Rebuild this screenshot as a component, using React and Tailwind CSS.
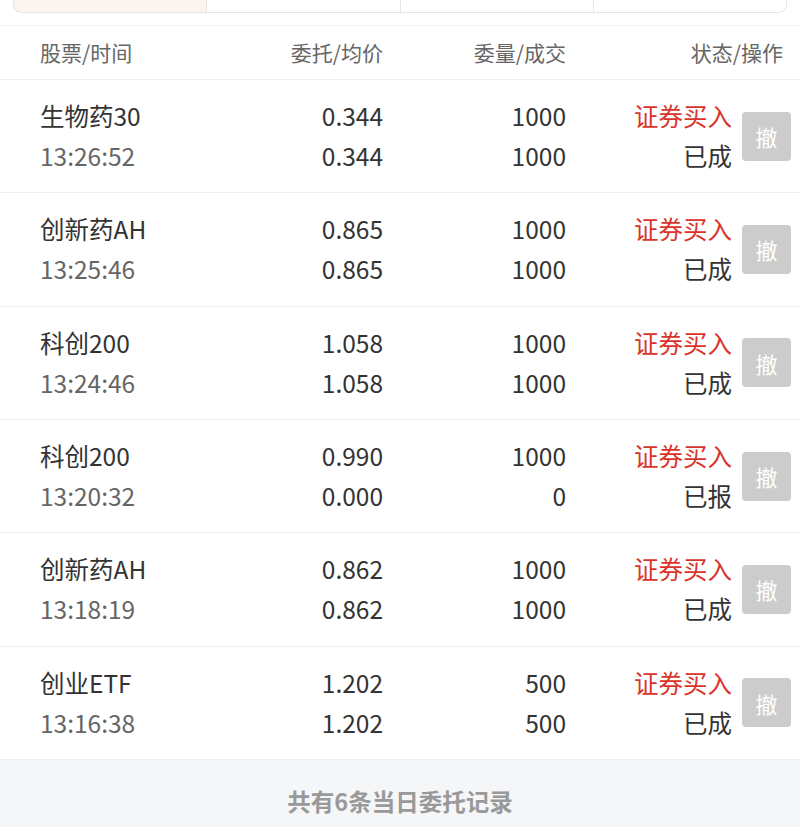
import React from 'react'

const orders = [
  { name: '生物药30', time: '13:26:52', price: '0.344', avg: '0.344', qty: '1000', done: '1000', status: '已成' },
  { name: '创新药AH', time: '13:25:46', price: '0.865', avg: '0.865', qty: '1000', done: '1000', status: '已成' },
  { name: '科创200', time: '13:24:46', price: '1.058', avg: '1.058', qty: '1000', done: '1000', status: '已成' },
  { name: '科创200', time: '13:20:32', price: '0.990', avg: '0.000', qty: '1000', done: '0', status: '已报' },
  { name: '创新药AH', time: '13:18:19', price: '0.862', avg: '0.862', qty: '1000', done: '1000', status: '已成' },
  { name: '创业ETF', time: '13:16:38', price: '1.202', avg: '1.202', qty: '500', done: '500', status: '已成' },
]

const tabs = ['当日委托', '当日成交', '历史委托', '历史成交']

export default function App() {
  return (
    <div className="w-[800px] h-[827px] overflow-hidden bg-white font-['Noto_Sans_CJK_SC','Noto_Sans',sans-serif]">
      {/* Tabs, scrolled partly out of view */}
      <div className="px-[13px] pb-[12px] border-b border-[#f3f3f3]">
        <div className="-mt-[32px] flex h-[45px] border border-[#e6e6e6] rounded-b-[8px] overflow-hidden">
          {tabs.map((tab, i) => (
            <div
              key={tab}
              className={
                i === 0
                  ? 'flex-1 flex items-end justify-center pb-[10px] bg-[#fcf4ef] border border-[#d9a88c] rounded-bl-[8px] -m-px text-[20px] leading-[24px] text-[#d9844f]'
                  : 'flex-1 flex items-end justify-center pb-[10px] border-l border-[#e6e6e6] text-[20px] leading-[24px] text-[#666]'
              }
            >
              {tab}
            </div>
          ))}
        </div>
      </div>

      {/* Header */}
      <div className="flex items-center h-[54px] pl-[40px] pr-[17px] border-b border-[#f0f0f0] text-[21px] text-[#666]">
        <div className="w-[200px]">股票/时间</div>
        <div className="w-[143px] text-right">委托/均价</div>
        <div className="w-[183px] text-right">委量/成交</div>
        <div className="w-[217px] text-right">状态/操作</div>
      </div>

      {/* Rows */}
      {orders.map((o, i) => (
        <div key={i} className="flex items-center h-[113.33px] pl-[40px] pr-[9px] border-b border-[#f0f0f0] text-[24.5px] leading-[40px]">
          <div className="w-[200px]">
            <div className="text-[#333]">{o.name}</div>
            <div className="text-[#666]">{o.time}</div>
          </div>
          <div className="w-[143px] text-right text-[#333]">
            <div>{o.price}</div>
            <div>{o.avg}</div>
          </div>
          <div className="w-[183px] text-right text-[#333]">
            <div>{o.qty}</div>
            <div>{o.done}</div>
          </div>
          <div className="w-[166px] text-right">
            <div className="text-[#d9342b]">证券买入</div>
            <div className="text-[#333]">{o.status}</div>
          </div>
          <button className="ml-[10px] w-[49px] h-[49px] rounded-[4px] bg-[#cccccc] text-white text-[22px] flex items-center justify-center">
            撤
          </button>
        </div>
      ))}

      {/* Footer */}
      <div className="bg-[#f5f6f8] h-[120px] pt-[24px] text-center text-[23.5px] font-semibold text-[#999]">
        共有6条当日委托记录
      </div>
    </div>
  )
}
